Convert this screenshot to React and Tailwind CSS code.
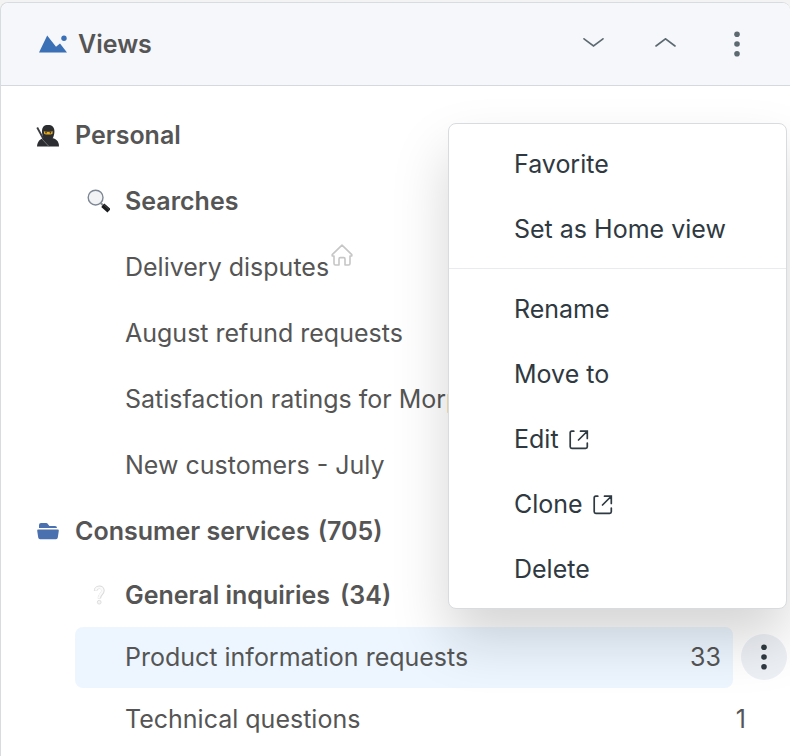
import React from "react";

const personalViews = [
  { title: "Delivery disputes", isHome: true },
  { title: "August refund requests" },
  { title: "Satisfaction ratings for Morpheus" },
  { title: "New customers - July" },
];

const menuGroups = [
  [{ label: "Favorite" }, { label: "Set as Home view" }],
  [
    { label: "Rename" },
    { label: "Move to" },
    { label: "Edit", external: true },
    { label: "Clone", external: true },
    { label: "Delete" },
  ],
];

function ViewsIcon() {
  return (
    <svg width="28" height="18" viewBox="0 0 28 18" fill="#3b6fb6" aria-hidden="true">
      <path d="M0 17.5 8.2 0.5 17 11.8 21 8.5 28 17.5Z" />
      <circle cx="25" cy="3.3" r="2.7" />
    </svg>
  );
}

function NinjaIcon() {
  return (
    <svg width="24" height="24" viewBox="0 0 24 24" aria-hidden="true">
      <path d="M2.2 4.5 9 17" stroke="#3b3c3f" strokeWidth="1.8" />
      <path d="M2 23.5C2.5 18 5 16 9 15L16.5 15C21 15.8 24 17.8 24 23.5Z" fill="#2b2d30" />
      <path d="M7 8.5C7 3.8 9 2 13 2S19.4 3.8 19.4 8.5C19.4 13.5 17 18 13 18S7 13.5 7 8.5Z" fill="#2b2d30" />
      <path d="M8.8 8.2Q13 9.4 17.8 8.2L17.4 11Q13 12.2 9.2 11Z" fill="#e9ac1c" />
      <circle cx="11" cy="9.8" r="0.8" fill="#2b2d30" />
      <circle cx="15.4" cy="9.8" r="0.8" fill="#2b2d30" />
      <path d="M7 16 14 23.5" stroke="#77797c" strokeWidth="0.9" />
    </svg>
  );
}

function SearchIcon() {
  return (
    <svg width="24" height="24" viewBox="0 0 24 24" aria-hidden="true">
      <path d="M14.7 14 18 17.3" stroke="#8b8f94" strokeWidth="2" />
      <path d="M16.8 16.2 23 21.8" stroke="#191a1c" strokeWidth="4.6" />
      <path d="M18 15.8 23.4 20.8" stroke="#5c5f63" strokeWidth="0.7" />
      <circle cx="9.6" cy="8.6" r="7.4" fill="#f1f3f4" stroke="#7d8794" strokeWidth="1.4" />
    </svg>
  );
}

function FolderIcon() {
  return (
    <svg width="24" height="18" viewBox="-2 0 24 18" fill="#4a70b0" aria-hidden="true">
      <path d="M2 6V3Q2 1 4 1H9Q10.4 1 11 2.2L12.4 4H18Q20 4 20 6Z" />
      <path d="M1.2 7.5H20.8Q22 7.5 21.8 8.8L20.8 15.5Q20.5 17.2 19 17.2H3Q1.5 17.2 1.2 15.5L0.2 8.8Q0 7.5 1.2 7.5Z" />
    </svg>
  );
}

function QuestionIcon() {
  return (
    <svg width="24" height="24" viewBox="0 0 24 24" fill="none" aria-hidden="true">
      <path d="M9.5 8C9.5 3 17 3 17 7.5C17 11 13.4 11 13.4 15.5" stroke="#d9d9d9" strokeWidth="3.4" />
      <path d="M9.6 7.6C9.9 3.4 16.6 3.6 16.6 7.5C16.6 10.6 13 11 13 15" stroke="#fafafa" strokeWidth="2.2" />
      <circle cx="13.2" cy="19.2" r="1.9" fill="#f4f4f4" stroke="#d4d4d4" strokeWidth="0.7" />
    </svg>
  );
}

function HomeIcon() {
  return (
    <svg
      width="22"
      height="24"
      viewBox="0 0 22 24"
      fill="none"
      stroke="#c6c6c6"
      strokeWidth="1.6"
      strokeLinejoin="round"
      strokeLinecap="round"
      aria-hidden="true"
    >
      <path d="M11 2.2 1.2 11.6V13H3V20.5Q3 22 4.4 22H8V16Q8 14.6 9.2 14.6H12.8Q14 14.6 14 16V22H17.6Q19 22 19 20.5V13H20.8V11.6Z" />
    </svg>
  );
}

function ExternalIcon() {
  return (
    <svg
      width="20"
      height="22"
      viewBox="0 -2 20 22"
      fill="none"
      stroke="#2f3941"
      strokeWidth="1.7"
      strokeLinecap="round"
      aria-hidden="true"
    >
      <path d="M4.8 1.2H2.8Q1.2 1.2 1.2 2.8V16.7Q1.2 18.3 2.8 18.3H16.7Q18.3 18.3 18.3 16.7V13" />
      <path d="M9.5 10 18 1.5M11.5 1.2H18.3V8.5" />
    </svg>
  );
}

function ChevronIcon({ up }) {
  return (
    <svg width="22" height="12" viewBox="0 0 22 12" fill="none" stroke="#5c6970" strokeWidth="1.6" strokeLinecap="round" aria-hidden="true">
      <path d={up ? "M2 8 11.5 0.8 21 8" : "M2 0.8 11.5 8 21 0.8"} />
    </svg>
  );
}

function DotsIcon({ color }) {
  return (
    <svg width="6" height="26" viewBox="0 0 6 26" fill={color} aria-hidden="true">
      <circle cx="3" cy="3.2" r="2.8" />
      <circle cx="3" cy="13" r="2.8" />
      <circle cx="3" cy="22.8" r="2.8" />
    </svg>
  );
}

function ContextMenu() {
  return (
    <div
      role="menu"
      className="absolute right-[3px] bottom-full mb-[17px] w-[339px] rounded-lg border border-[#d8dcde] bg-white text-[#2f3941] shadow-[0_30px_56px_0_rgba(0,0,0,0.17)]"
    >
      {menuGroups.map((group, i) => (
        <div key={i} className="border-t border-[#e9ebed] py-[7px] first:border-t-0">
          {group.map((item) => (
            <button
              key={item.label}
              type="button"
              role="menuitem"
              className="flex h-[65px] w-full items-center gap-[10px] pl-[65px] text-left"
            >
              {item.label}
              {item.external && <ExternalIcon />}
            </button>
          ))}
        </div>
      ))}
    </div>
  );
}

export default function App() {
  return (
    <div className="min-h-screen overflow-hidden bg-[#f3f3f3] pt-[2px] font-['Inter',sans-serif] text-[25px] leading-8 text-[#555]">
      <section className="min-h-[754px] rounded-t-lg border border-b-0 border-r-0 border-[#d8dcde] bg-white">
        <header className="flex h-[83px] items-center rounded-t-lg border-b border-[#d5d9dd] bg-[#f5f7fb] pr-[31px] pl-[38px]">
          <ViewsIcon />
          <h1 className="ml-[11px] flex-1 font-semibold">Views</h1>
          <div className="flex items-center gap-7">
            <button type="button" aria-label="Expand all" className="flex h-11 w-11 items-center justify-center">
              <ChevronIcon />
            </button>
            <button type="button" aria-label="Collapse all" className="flex h-11 w-11 items-center justify-center">
              <ChevronIcon up />
            </button>
            <button type="button" aria-label="Views options" className="flex h-11 w-11 items-center justify-center">
              <DotsIcon color="#5c6970" />
            </button>
          </div>
        </header>

        <div className="pt-4">
          <h2 className="flex h-[66px] items-center pl-[34px] font-semibold">
            <span className="w-10">
              <NinjaIcon />
            </span>
            Personal
          </h2>
          <h3 className="flex h-[66px] items-center pl-[85px] font-semibold">
            <span className="w-[39px]">
              <SearchIcon />
            </span>
            Searches
          </h3>
          <ul>
            {personalViews.map((view) => (
              <li key={view.title} className="flex h-[66px] items-center pl-[124px]">
                <a href="#" className="whitespace-nowrap">
                  {view.title}
                </a>
                {view.isHome && (
                  <span className="ml-0.5 pb-6">
                    <HomeIcon />
                  </span>
                )}
              </li>
            ))}
          </ul>

          <h2 className="flex h-[66px] items-center pl-[34px] font-semibold">
            <span className="w-10">
              <FolderIcon />
            </span>
            Consumer services
            <span className="ml-2">(705)</span>
          </h2>
          <h3 className="flex h-[62px] items-center pl-[85px] font-semibold">
            <span className="w-[39px]">
              <QuestionIcon />
            </span>
            General inquiries
            <span className="ml-[10px]">(34)</span>
          </h3>
          <ul>
            <li className="relative flex h-[62px] items-center gap-2 pr-[3px] pl-[74px]">
              <a href="#" className="flex h-[61px] flex-1 items-center justify-between rounded-lg bg-[#edf6ff] pr-3 pl-[50px]">
                <span>Product information requests</span>
                <span>33</span>
              </a>
              <button
                type="button"
                aria-label="View options"
                className="flex h-[46px] w-[46px] items-center justify-center rounded-full bg-[#edf0f5]"
              >
                <DotsIcon color="#2f3941" />
              </button>
              <ContextMenu />
            </li>
            <li className="flex h-[62px] items-center">
              <a href="#" className="flex flex-1 items-center justify-between pr-11 pl-[124px]">
                <span>Technical questions</span>
                <span>1</span>
              </a>
            </li>
          </ul>
        </div>
      </section>
    </div>
  );
}
